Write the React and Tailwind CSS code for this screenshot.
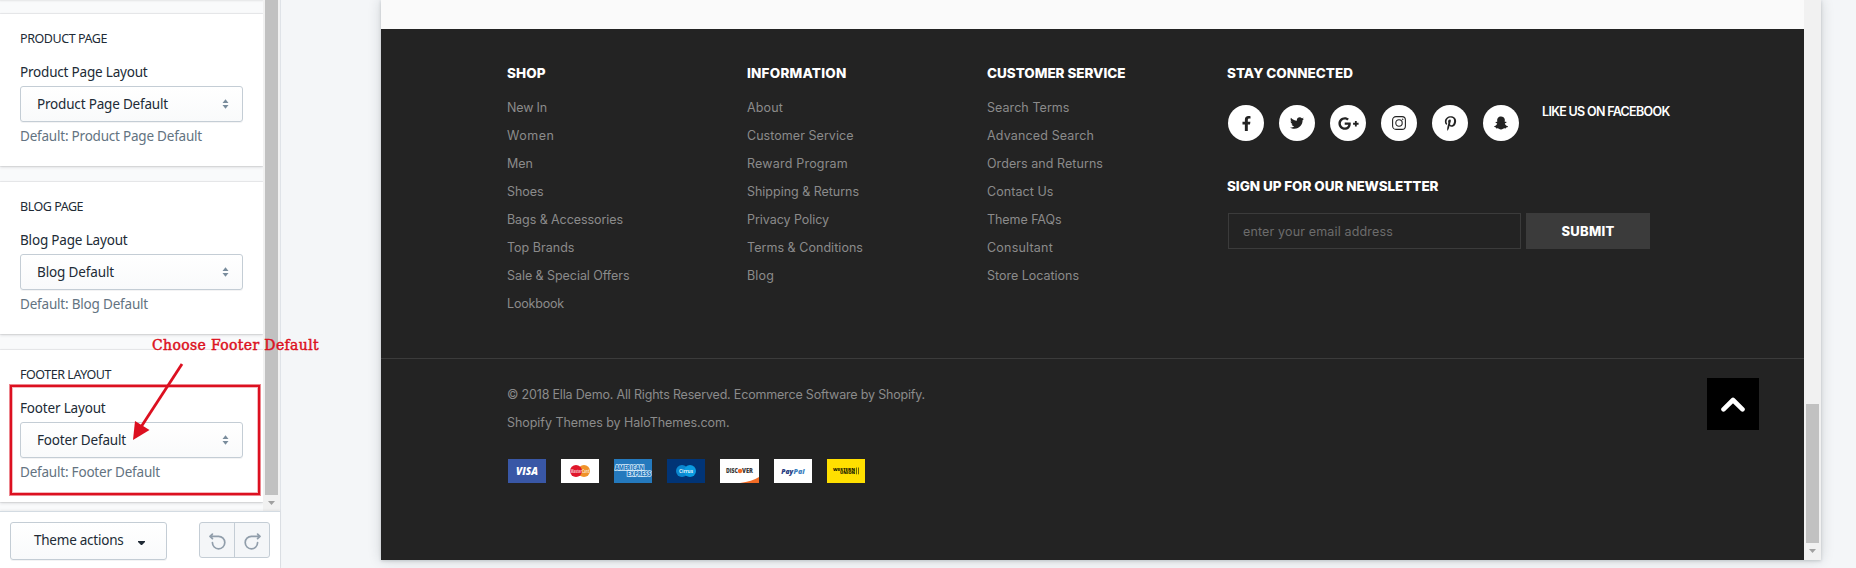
import React, { useLayoutEffect, useRef, useState } from "react";
import { FaFacebookF, FaTwitter, FaGooglePlusG, FaPinterestP, FaSnapchatGhost } from "react-icons/fa";

/* Text whose tracking is adjusted so that it spans exactly `w` pixels. */
function Fit({ w, className = "", children }) {
  const ref = useRef(null);
  const [ls, setLs] = useState(0);
  useLayoutEffect(() => {
    const natural = ref.current.getBoundingClientRect().width;
    setLs((w - natural) / String(children).length);
  }, []);
  return (
    <span ref={ref} style={{ letterSpacing: ls + "px" }} className={"inline-block whitespace-nowrap " + className}>
      {children}
    </span>
  );
}

const SECTIONS = [
  { title: ["PRODUCT PAGE", 87], label: ["Product Page Layout", 127.5], value: ["Product Page Default", 131], help: ["Default: Product Page Default", 182] },
  { title: ["BLOG PAGE", 63], label: ["Blog Page Layout", 107.5], value: ["Blog Default", 77], help: ["Default: Blog Default", 128] },
  { title: ["FOOTER LAYOUT", 91], label: ["Footer Layout", 85.5], value: ["Footer Default", 89], help: ["Default: Footer Default", 140] },
];

function Section({ title, label, value, help }) {
  return (
    <section className="h-[152px] shrink-0 bg-white px-5 pt-4 shadow-[0_0_0_1px_rgba(63,63,68,0.07),0_1px_3px_0_rgba(63,63,68,0.2)]">
      <h2 className="flex h-[18px] items-center text-[12.5px] text-[#212b36]"><Fit w={title[1]}>{title[0]}</Fit></h2>
      <div className="mt-[14px] flex h-5 items-center text-[13.5px] text-[#212b36]"><Fit w={label[1]}>{label[0]}</Fit></div>
      <div className="mt-1 flex h-9 w-[223px] items-center justify-between rounded-[3px] border border-[#c4cdd5] bg-gradient-to-b from-white to-[#f9fafb] pl-4 pr-[13px] text-[13.5px] text-[#212b36] shadow-[0_1px_0_rgba(22,29,37,0.05)]">
        <Fit w={value[1]}>{value[0]}</Fit>
        <svg width="7" height="10" viewBox="0 0 7 10" fill="#798c9c"><path d="M0.5 4 3.5 0.3 6.5 4z M0.5 6 3.5 9.7 6.5 6z" /></svg>
      </div>
      <div className="mt-1 flex h-5 items-center text-[13.5px] text-[#637381]"><Fit w={help[1]}>{help[0]}</Fit></div>
    </section>
  );
}

function Sidebar() {
  return (
    <aside className="relative flex h-[568px] w-[281px] shrink-0 flex-col border-r border-[#dfe3e8] font-['Noto_Sans','Open_Sans',sans-serif]">
      <div className="flex h-[511px] overflow-hidden">
        <div className="flex w-[263px] flex-col gap-4 overflow-hidden bg-[#f9fafb]">
          <div className="-mb-[2px] h-0 shrink-0 shadow-[0_0_2px_1px_rgba(63,63,68,0.12)]" />
          {SECTIONS.map((s) => <Section key={s.title[0]} {...s} />)}
        </div>
        <div className="flex w-[17px] flex-col items-center bg-[#f1f1f1]">
          <div className="h-[495px] w-[13px] bg-[#c1c1c1]" />
          <svg className="mt-[6px]" width="7" height="4" viewBox="0 0 7 4"><path d="M0 0h7L3.5 4z" fill="#a0a0a0" /></svg>
        </div>
      </div>
      <div className="flex h-[57px] items-start justify-between border-t border-[#d3dbe2] bg-white pl-[10px] pr-[10px] pt-[10px] shadow-[0_-1px_2px_rgba(63,63,68,0.08)]">
        <button className="flex h-[38px] w-[157px] items-center rounded-[3px] border border-[#c4cdd5] bg-gradient-to-b from-white to-[#f9fafb] pl-[23px] text-[13.5px] text-[#212b36] shadow-[0_1px_0_rgba(22,29,37,0.05)]">
          <Fit w={89.5} className="pb-[2px]">Theme actions</Fit>
          <svg className="ml-[14px] mt-[4px]" width="7" height="4" viewBox="0 0 7 4"><path d="M0 0h7v1L4 4H3L0 1z" fill="#212b36" /></svg>
        </button>
        <div className="flex h-9 w-[71px] rounded-[3px] border border-[#c4cdd5] bg-[#f4f6f8]">
          <div className="flex w-[35px] items-center justify-center border-r border-[#c4cdd5]"><TurnIcon /></div>
          <div className="flex flex-1 items-center justify-center"><TurnIcon flip /></div>
        </div>
      </div>
    </aside>
  );
}

function TurnIcon({ flip }) {
  return (
    <svg className={flip ? "mt-[2px] -scale-x-100" : "mt-[2px]"} width="17" height="17" viewBox="0 0 17 17" fill="none" stroke="#919eab" strokeWidth="1.7" strokeLinecap="round" strokeLinejoin="round">
      <path d="M3.4 1.1 1 3.4 3.4 5.7M1.2 3.4H9.6A6.2 6.2 0 1 1 3.4 9.6" />
    </svg>
  );
}

const COLUMNS = [
  { title: ["SHOP", 38.5], links: [["New In", 40], ["Women", 47.5], ["Men", 26], ["Shoes", 36.5], ["Bags & Accessories", 116], ["Top Brands", 67.5], ["Sale & Special Offers", 122.5], ["Lookbook", 57]] },
  { title: ["INFORMATION", 99.5], links: [["About", 36], ["Customer Service", 106.5], ["Reward Program", 101], ["Shipping & Returns", 112], ["Privacy Policy", 82], ["Terms & Conditions", 116], ["Blog", 27]] },
  { title: ["CUSTOMER SERVICE", 138.5], links: [["Search Terms", 82.5], ["Advanced Search", 107], ["Orders and Returns", 116], ["Contact Us", 66.5], ["Theme FAQs", 74.5], ["Consultant", 66], ["Store Locations", 92]] },
];

function Heading({ w, children }) {
  return <h3 className="flex h-5 items-center text-[13.5px] font-extrabold text-white"><Fit w={w}>{children}</Fit></h3>;
}

const SOCIAL = [
  <FaFacebookF key="f" size={15} />,
  <FaTwitter key="t" size={14} />,
  <FaGooglePlusG key="g" size={21} />,
  <svg key="i" width="14" height="14" viewBox="0 0 14 14" fill="none" stroke="#232323" strokeWidth="1.1">
    <rect x=".6" y=".6" width="12.8" height="12.8" rx="3.4" /><circle cx="7" cy="7" r="3.2" /><circle cx="10.7" cy="3.3" r=".5" fill="#232323" strokeWidth=".5" />
  </svg>,
  <FaPinterestP key="p" size={15} />,
  <FaSnapchatGhost key="s" size={14} />,
];

function Card({ bg, width = 38, children }) {
  return (
    <svg width={width} height="24" viewBox={`0 0 ${width} 24`} fontFamily="Open Sans, sans-serif">
      <rect width={width} height="24" fill={bg} />
      {children}
    </svg>
  );
}

function Payments() {
  return (
    <div className="mt-[22px] flex gap-[15px]">
      <Card bg="#3957a6"><text x="8" y="15.7" fontSize="10" fontWeight="800" fontStyle="italic" fill="#fff" textLength="22" lengthAdjust="spacingAndGlyphs">VISA</text></Card>
      <Card bg="#fff">
        <circle cx="23" cy="12" r="6" fill="#f0932a" /><circle cx="15" cy="12" r="6" fill="#e0162b" />
        <text x="9.5" y="13.7" fontSize="4.6" fontWeight="700" fill="#fff" fillOpacity=".75" textLength="19" lengthAdjust="spacingAndGlyphs">MasterCard</text>
      </Card>
      <Card bg="#2479bd">
        <g fontWeight="800" fill="#2479bd" stroke="#d8ecfa" strokeWidth="1.5" paintOrder="stroke">
          <text x="1" y="11.2" fontSize="6" textLength="29" lengthAdjust="spacingAndGlyphs">AMERICAN</text>
          <text x="13" y="17.2" fontSize="6" textLength="24" lengthAdjust="spacingAndGlyphs">EXPRESS</text>
        </g>
      </Card>
      <Card bg="#013476">
        <circle cx="15" cy="12" r="6" fill="#0a86cf" /><circle cx="23" cy="12" r="6" fill="#0a9be0" />
        <text x="12" y="13.8" fontSize="5" fontWeight="700" fill="#fff" fillOpacity=".9" textLength="14" lengthAdjust="spacingAndGlyphs">Cirrus</text>
      </Card>
      <Card bg="#fff" width={39}>
        <path d="M20 24Q32 22.5 39 18V24z" fill="#f26b25" />
        <g fontSize="6" fontWeight="800" fill="#3a3a3a">
          <text x="6" y="14.2" textLength="12" lengthAdjust="spacingAndGlyphs">DISC</text>
          <text x="22" y="14.2" textLength="11" lengthAdjust="spacingAndGlyphs">VER</text>
        </g>
        <circle cx="20" cy="12" r="2.2" fill="#f26b25" />
      </Card>
      <Card bg="#fff">
        <g fontSize="7.6" fontWeight="800" fontStyle="italic">
          <text x="7.3" y="14.6" fill="#253b80" textLength="12" lengthAdjust="spacingAndGlyphs">Pay</text>
          <text x="19.5" y="14.6" fill="#3b7fc0" textLength="11" lengthAdjust="spacingAndGlyphs">Pal</text>
        </g>
      </Card>
      <Card bg="#ffdf00">
        <g fontSize="4.2" fontWeight="800" fill="#141400">
          <text x="6" y="11.8" textLength="22" lengthAdjust="spacingAndGlyphs">WESTERN</text>
          <text x="13" y="15.3" textLength="15" lengthAdjust="spacingAndGlyphs">UNION</text>
        </g>
        <path d="M29.5 8.5v6.8M31.5 8.5v6.8" stroke="#4a4200" strokeWidth=".8" />
      </Card>
    </div>
  );
}

function Preview() {
  return (
    <div className="ml-[100px] flex h-[560px] w-[1440px] shadow-[0_0_12px_rgba(33,43,54,0.18),0_1px_3px_rgba(33,43,54,0.18)]">
      <div className="flex w-[1423px] flex-col font-['Inter','Open_Sans',sans-serif]">
        <div className="h-[29px] bg-[#fafafa]" />
        <footer className="flex flex-1 flex-col bg-[#232323] text-[12.5px] text-[#8b8b8b]">
          <div className="flex h-[330px] border-b border-[#3b3b3b] pl-[126px] pt-[34px]">
            {COLUMNS.map((c) => (
              <div key={c.title[0]} className="w-[240px]">
                <Heading w={c.title[1]}>{c.title[0]}</Heading>
                <ul className="mt-[11px]">
                  {c.links.map(([t, w]) => <li key={t} className="flex h-7 items-center"><Fit w={w}>{t}</Fit></li>)}
                </ul>
              </div>
            ))}
            <div>
              <div className="flex">
                <div className="w-[315px]">
                  <Heading w={126}>STAY CONNECTED</Heading>
                  <div className="mt-[22px] flex gap-[15px] pl-px">
                    {SOCIAL.map((icon, i) => (
                      <span key={i} className="flex size-9 items-center justify-center rounded-full bg-white text-[#232323]">{icon}</span>
                    ))}
                  </div>
                </div>
                <div className="pt-[39px] text-[12.5px] font-semibold leading-5 text-white"><Fit w={127.5}>LIKE US ON FACEBOOK</Fit></div>
              </div>
              <div className="mt-[35px]"><Heading w={211.5}>SIGN UP FOR OUR NEWSLETTER</Heading></div>
              <div className="mt-[17px] flex gap-[5px] pl-px">
                <div className="flex h-9 w-[293px] items-center border border-[#3b3b3b] pl-[14px] pt-[2px] text-[12.5px] text-[#6c6c6c]"><Fit w={150}>enter your email address</Fit></div>
                <button className="flex h-9 w-[124px] items-center justify-center bg-[#3b3b3b] pt-px text-[13px] font-extrabold text-white"><Fit w={53}>SUBMIT</Fit></button>
              </div>
            </div>
          </div>
          <div className="flex justify-between pl-[127px] pr-[45px] pt-[19px]">
            <div className="pt-[3px]">
              <p className="-ml-px flex h-7 items-center pt-px"><Fit w={418}>© 2018 Ella Demo. All Rights Reserved. Ecommerce Software by Shopify.</Fit></p>
              <p className="-ml-px flex h-7 items-center pt-px"><Fit w={222.5}>Shopify Themes by HaloThemes.com.</Fit></p>
              <Payments />
            </div>
            <div className="flex size-[52px] items-center justify-center bg-black">
              <svg width="24" height="15" viewBox="0 0 24 15" fill="none" stroke="#fff" strokeWidth="4.6" strokeLinecap="round" strokeLinejoin="round"><path d="M2.5 12.3 12 3 21.5 12.3" /></svg>
            </div>
          </div>
        </footer>
      </div>
      <div className="flex w-[17px] flex-col items-center bg-[#f1f1f1] pt-[404px]">
        <div className="h-[139px] w-[13px] bg-[#c1c1c1]" />
        <svg className="mt-[6px]" width="7" height="4" viewBox="0 0 7 4"><path d="M0 0h7L3.5 4z" fill="#a0a0a0" /></svg>
      </div>
    </div>
  );
}

function Annotation() {
  return (
    <>
      <div className="absolute left-[10px] top-[385px] h-[110px] w-[250px] border-2 border-[#dc1020] shadow-[0_0_0_1px_rgba(220,16,32,0.5),inset_0_0_0_1px_rgba(220,16,32,0.3)]" />
      <svg className="absolute left-[125px] top-[358px]" width="65" height="90" viewBox="125 358 65 90">
        <path d="M182 364 141 427" stroke="#dc1020" strokeWidth="2.8" />
        <path d="M133 440 135 421 149.5 430z" fill="#dc1020" />
      </svg>
      <div className="absolute left-[152px] top-[335px] font-['DejaVu_Serif_Condensed','DejaVu_Serif',serif] text-[15.5px] leading-5 text-[#dc1020] [-webkit-text-stroke:0.45px_#dc1020]">
        <Fit w={167}>Choose Footer Default</Fit>
      </div>
    </>
  );
}

export default function App() {
  return (
    <div className="relative flex h-[568px] w-[1856px] overflow-hidden bg-[#f4f6f8]">
      <Sidebar />
      <Preview />
      <Annotation />
    </div>
  );
}
